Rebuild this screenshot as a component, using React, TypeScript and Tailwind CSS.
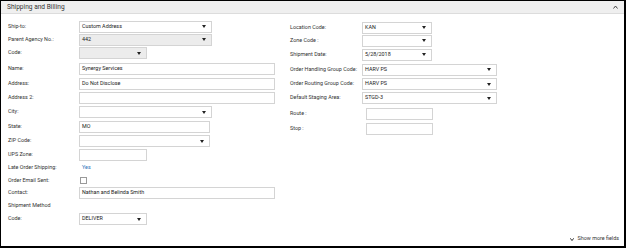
import React from "react";

type BoxProps = { w: number; value?: string; gray?: boolean; dd?: boolean };

const widthCls: Record<number, string> = {
  133: "w-[133px]",
  68: "w-[68px]",
  196: "w-[196px]",
  131: "w-[131px]",
  70: "w-[70px]",
  135: "w-[135px]",
  67: "w-[67px]",
};

function Box({ w, value, gray, dd }: BoxProps) {
  return (
    <div
      className={`${widthCls[w]} h-[12px] border border-[#d4d4d4] ${gray ? "bg-[#ececec]" : "bg-white"} flex items-center justify-between pl-[2px] pr-[5px] shrink-0`}
    >
      <span className="text-[5.4px] text-[#222] leading-none whitespace-nowrap">{value}</span>
      {dd && (
        <svg width="4" height="3" viewBox="0 0 4 3" className="shrink-0">
          <path d="M0 0 L4 0 L2 3 Z" fill="#222" />
        </svg>
      )}
    </div>
  );
}

function Row({ h, label, lw, children }: { h: string; label: string; lw: string; children?: React.ReactNode }) {
  return (
    <div className={`flex items-center ${h}`}>
      <div className={`${lw} shrink-0 text-[5.4px] leading-none text-[#333] whitespace-nowrap`}>{label}</div>
      {children}
    </div>
  );
}

export default function App() {
  const L = "w-[71px]";
  const R = "w-[72px]";
  return (
    <div
      className="w-[626px] h-[248px] bg-white border-t border-l border-r-2 border-b-2 border-black flex flex-col overflow-hidden"
      style={{ fontFamily: 'Roboto, "Open Sans", sans-serif' }}
    >
      <div className="h-[13px] shrink-0 bg-[#efefef] border-b border-[#dcdcdc] flex items-center justify-between pl-[6px] pr-[6px]">
        <span className="text-[6.6px] leading-none text-[#333]">Shipping and Billing</span>
        <svg width="5" height="4" viewBox="0 0 5 4">
          <path d="M0.5 3.5 L2.5 1 L4.5 3.5" stroke="#444" strokeWidth="1" fill="none" />
        </svg>
      </div>
      <div className="flex flex-1 pt-[6px]">
        <div className="w-[289px] shrink-0 flex flex-col pl-[7px]">
          <Row h="h-[13px]" label="Ship-to:" lw={L}><Box w={133} value="Custom Address" dd /></Row>
          <Row h="h-[13px]" label="Parent Agency No.:" lw={L}><Box w={133} value="442" gray dd /></Row>
          <Row h="h-[14px]" label="Code:" lw={L}><Box w={68} gray dd /></Row>
          <Row h="h-[17px]" label="Name:" lw={L}><Box w={196} value="Synergy Services" /></Row>
          <Row h="h-[14px]" label="Address:" lw={L}><Box w={196} value="Do Not Disclose" /></Row>
          <Row h="h-[14px]" label="Address 2:" lw={L}><Box w={196} /></Row>
          <Row h="h-[14px]" label="City:" lw={L}><Box w={133} dd /></Row>
          <Row h="h-[16px]" label="State:" lw={L}><Box w={131} value="MO" /></Row>
          <Row h="h-[12px]" label="ZIP Code:" lw={L}><Box w={131} dd /></Row>
          <Row h="h-[15px]" label="UPS Zone:" lw={L}><Box w={68} /></Row>
          <Row h="h-[12px]" label="Late Order Shipping:" lw={L}>
            <span className="text-[5.4px] leading-none text-[#2a6fb8] pl-[3px]">Yes</span>
          </Row>
          <Row h="h-[13px]" label="Order Email Sent:" lw={L}>
            <div className="w-[7px] h-[7px] border border-[#9a9a9a] bg-white ml-[1px]" />
          </Row>
          <Row h="h-[12px]" label="Contact:" lw={L}><Box w={196} value="Nathan and Belinda Smith" /></Row>
          <Row h="h-[14px]" label="Shipment Method" lw={L} />
          <Row h="h-[12px]" label="Code:" lw={L}><Box w={68} value="DELIVER" dd /></Row>
        </div>
        <div className="flex flex-col pt-[1px]">
          <Row h="h-[13px]" label="Location Code:" lw={R}><Box w={70} value="KAN" dd /></Row>
          <Row h="h-[13px]" label="Zone Code :" lw={R}><Box w={70} dd /></Row>
          <Row h="h-[15px]" label="Shipment Date:" lw={R}><Box w={70} value="5/28/2018" dd /></Row>
          <Row h="h-[15px]" label="Order Handling Group Code:" lw={R}><Box w={135} value="HARV PS" dd /></Row>
          <Row h="h-[14px]" label="Order Routing Group Code:" lw={R}><Box w={135} value="HARV PS" dd /></Row>
          <Row h="h-[14px]" label="Default Staging Area:" lw={R}><Box w={135} value="STGD-3" dd /></Row>
          <Row h="h-[17px]" label="Route :" lw={R}>
            <div className="ml-[4px] flex"><Box w={67} /></div>
          </Row>
          <Row h="h-[13px]" label="Stop :" lw={R}>
            <div className="ml-[4px] flex"><Box w={67} /></div>
          </Row>
        </div>
      </div>
      <div className="h-[14px] shrink-0 flex items-center justify-end pr-[5px] gap-[4px]">
        <svg width="4" height="3" viewBox="0 0 4 3">
          <path d="M0.3 0.3 L2 2.6 L3.7 0.3" stroke="#333" strokeWidth="1" fill="none" />
        </svg>
        <span className="text-[5.4px] leading-none text-[#333]">Show more fields</span>
      </div>
    </div>
  );
}
